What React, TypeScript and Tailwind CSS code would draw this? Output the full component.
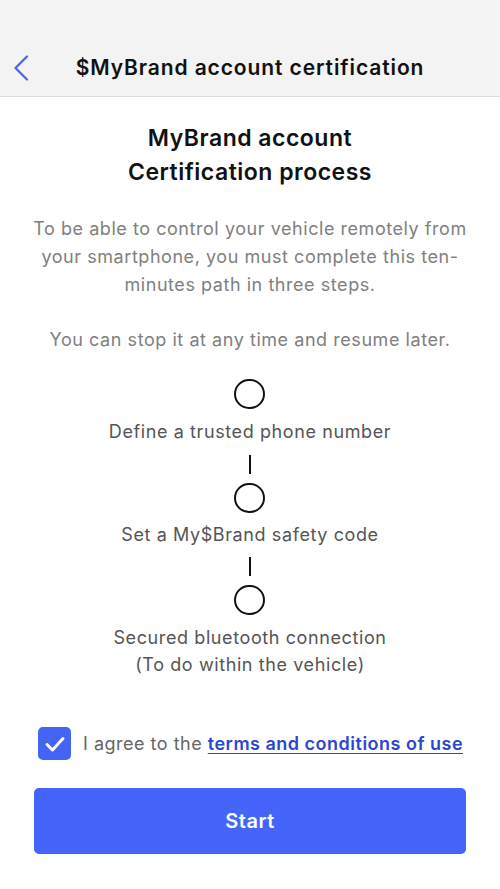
import React from "react";

export default function App() {
  return (
    <div
      className="w-[500px] h-[889px] bg-white flex flex-col overflow-hidden"
      style={{ fontFamily: "Inter, 'Noto Sans', sans-serif" }}
    >
      <header className="h-[97px] bg-[#f3f3f3] border-b border-[#dddddd] flex items-end pb-[14px] relative">
        <svg
          className="absolute left-[13px] top-[55px]"
          width="16"
          height="26"
          viewBox="0 0 16 26"
          fill="none"
        >
          <path d="M14 1.5 L2.5 13 L14 24.5" stroke="#4a63e8" strokeWidth="2.2" strokeLinecap="round" strokeLinejoin="round" />
        </svg>
        <h1 className="w-full text-center text-[21px] font-semibold text-[#111111] leading-[28px] tracking-[0.9px]">
          $MyBrand account certification
        </h1>
      </header>

      <main className="flex flex-col items-center px-[26px]">
        <h2 className="mt-[24px] text-center text-[23px] font-semibold text-[#111111] leading-[34px] tracking-[0.5px]">
          MyBrand account
          <br />
          Certification process
        </h2>
        <p className="mt-[26px] text-center text-[18px] text-[#808080] leading-[28px] tracking-[0.55px]">
          To be able to control your vehicle remotely from your smartphone, you must complete this ten-minutes path in three steps.
        </p>
        <p className="mt-[27px] text-center text-[18px] text-[#808080] leading-[28px] tracking-[0.55px]">
          You can stop it at any time and resume later.
        </p>

        <div className="mt-[25px] flex flex-col items-center text-[18px] text-[#555555] tracking-[0.6px]">
          <div className="w-[31px] h-[30px] rounded-full border-2 border-[#111111]" />
          <span className="mt-[9px] leading-[28px]">Define a trusted phone number</span>
          <div className="mt-[9px] w-[2px] h-[19px] bg-[#111111]" />
          <div className="mt-[9px] w-[31px] h-[30px] rounded-full border-2 border-[#111111]" />
          <span className="mt-[8px] leading-[28px]">Set a My$Brand safety code</span>
          <div className="mt-[8px] w-[2px] h-[19px] bg-[#111111]" />
          <div className="mt-[9px] w-[31px] h-[30px] rounded-full border-2 border-[#111111]" />
          <span className="mt-[9px] text-center leading-[27px]">
            Secured bluetooth connection
            <br />
            (To do within the vehicle)
          </span>
        </div>
      </main>

      <div className="mt-[49px] flex items-center pl-[38px]">
        <div className="w-[33px] h-[33px] rounded-[5px] bg-[#4563f5] flex items-center justify-center">
          <svg width="22" height="18" viewBox="0 0 22 18" fill="none">
            <path d="M3 9.5 L8.5 15 L19 3.5" stroke="white" strokeWidth="3" strokeLinecap="round" strokeLinejoin="round" />
          </svg>
        </div>
        <span className="ml-[12px] text-[18px] text-[#666666] leading-[28px] tracking-[0.5px]">
          I agree to the{" "}
          <a className="text-[#2b47d0] font-semibold underline underline-offset-[3px]" href="#">
            terms and conditions of use
          </a>
        </span>
      </div>

      <div className="px-[34px] mt-[28px]">
        <button className="w-full h-[66px] rounded-[5px] bg-[#4565fa] text-white text-[20px] font-semibold tracking-[0.5px]">
          Start
        </button>
      </div>
    </div>
  );
}
